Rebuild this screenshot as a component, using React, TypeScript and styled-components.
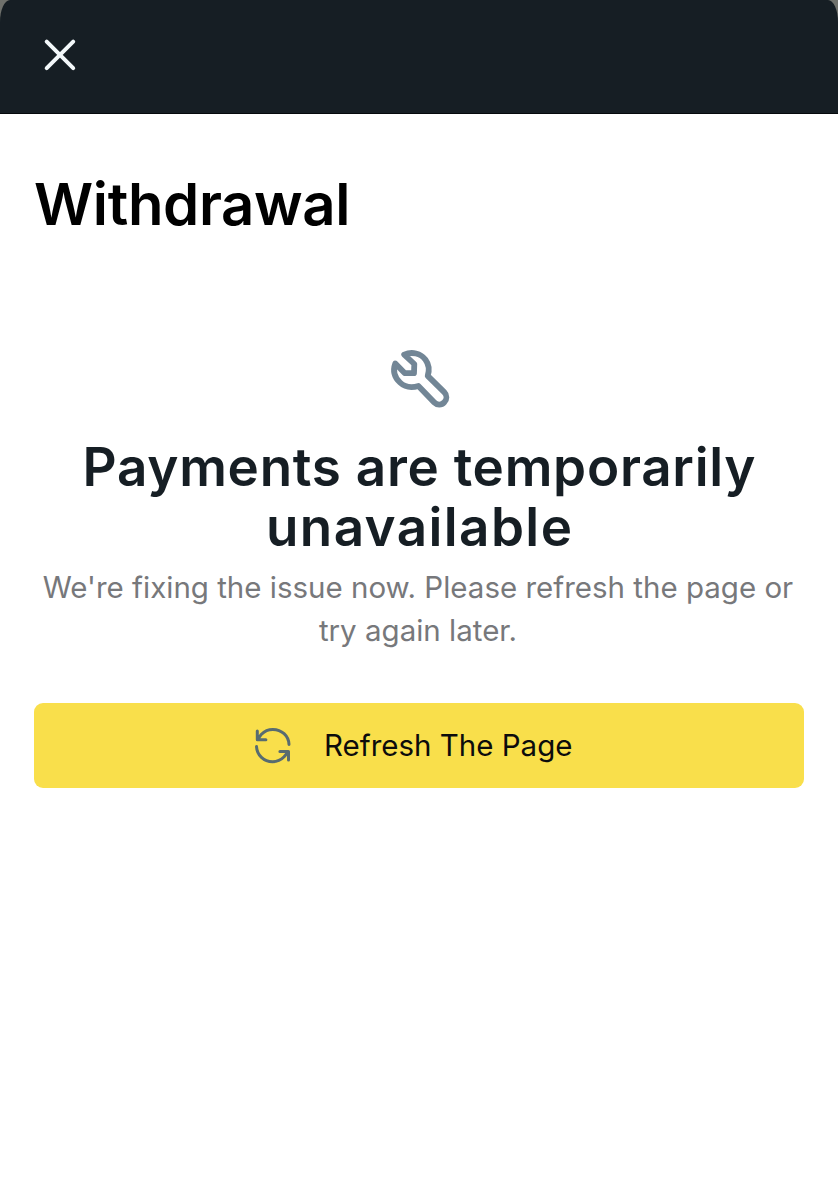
import React from 'react';
import styled, { createGlobalStyle } from 'styled-components';

const GlobalStyle = createGlobalStyle`
  * { box-sizing: border-box; }
  body { margin: 0; background: #fff; font-family: Inter, 'Liberation Sans', sans-serif; }
  h1, h2, p { margin: 0; }
`;

const Page = styled.div`
  min-height: 1200px;
  background: #fff;
`;

const Backdrop = styled.div`
  background: #6f716c;
`;

const TopBar = styled.header`
  height: 114px;
  padding: 38px 43px;
  background: #161e24;
  border-bottom: 1px solid #05090c;
  border-radius: 10px 10px 0 0 / 22px 22px 0 0;
`;

const IconButton = styled.button`
  display: block;
  width: 34px;
  height: 34px;
  padding: 0;
  border: 0;
  background: none;
`;

const Content = styled.main`
  display: flex;
  flex-direction: column;
  padding: 54px 34px 0;
`;

const Title = styled.h1`
  font-size: 58px;
  line-height: 72px;
  font-weight: 600;
  letter-spacing: -0.35px;
  color: #000;
  white-space: nowrap;
`;

const Notice = styled.section`
  display: flex;
  flex-direction: column;
  align-items: center;
  padding-top: 100px;
  text-align: center;
`;

const NoticeTitle = styled.h2`
  margin-top: 17px;
  font-size: 53px;
  line-height: 60px;
  font-weight: 600;
  color: #161e24;
  white-space: nowrap;
`;

const TitleLine = styled.span<{ $spacing: number }>`
  display: block;
  padding-left: ${({ $spacing }) => $spacing}px;
  letter-spacing: ${({ $spacing }) => $spacing}px;
`;

const NoticeText = styled.p`
  margin-top: 9px;
  padding-right: 2px;
  font-size: 29.5px;
  line-height: 43px;
  color: #77787b;
  white-space: nowrap;
`;

const RefreshButton = styled.button`
  display: flex;
  align-items: center;
  height: 85px;
  margin-top: 51px;
  padding: 0 0 0 220px;
  gap: 32px;
  border: 0;
  border-radius: 9px;
  background: #f9df4b;
  color: #0c0c0c;
  font: 400 29.5px/40px Inter, 'Liberation Sans', sans-serif;
  white-space: nowrap;
`;

const ButtonLabel = styled.span`
  padding-bottom: 2px;
`;

const CloseIcon = () => (
  <svg width="34" height="34" viewBox="0 0 34 34" fill="none" stroke="#f3f8fa" strokeWidth="4" strokeLinecap="round">
    <path d="M3.7 3.7 30.2 30.2M30.2 3.7 3.7 30.2" />
  </svg>
);

const WrenchIcon = () => (
  <svg width="80" height="80" viewBox="-1 -0.5 80 80" fill="none" stroke="#728696" strokeWidth="5.8" strokeLinecap="round" strokeLinejoin="round">
    <path d="M24.2 14.1C32 10.8 40.7 12.8 45.5 19.2C49 23.9 49.5 29.7 47.7 35.4L64.2 51.6C67.1 54.5 67.1 58.8 64.3 61.7C61.5 64.8 57.1 64.8 54.2 61.9L38.4 45.5C31.7 47.5 24.7 46.5 20 42C14.6 37 12.8 29.9 15.3 23L24.6 32.5L34 32.6L34.3 23.5Z" />
  </svg>
);

const RefreshIcon = () => (
  <svg width="38" height="38" viewBox="0 0 38 38" fill="none" stroke="#586c70" strokeWidth="3" strokeLinecap="round" strokeLinejoin="round">
    <path d="M3.3 4V12.7H11.9M3.5 12.5L7.5 7.2C10.4 4.1 14.4 2.4 18.9 2.4C27.7 2.4 34.6 8.9 35 17.4M2.5 19.6C3 28.2 9.8 34.7 18.6 34.7C23.1 34.7 27.2 32.8 30.1 29.8L34.3 24.7M25.9 24.4H34.5V33" />
  </svg>
);

export default function App() {
  return (
    <Page>
      <GlobalStyle />
      <Backdrop>
        <TopBar>
          <IconButton aria-label="Close"><CloseIcon /></IconButton>
        </TopBar>
      </Backdrop>
      <Content>
        <Title>Withdrawal</Title>
        <Notice>
          <WrenchIcon />
          <NoticeTitle>
            <TitleLine $spacing={0.73}>Payments are temporarily</TitleLine>
            <TitleLine $spacing={1.4}>unavailable</TitleLine>
          </NoticeTitle>
          <NoticeText>
            We're fixing the issue now. Please refresh the page or<br />try again later.
          </NoticeText>
        </Notice>
        <RefreshButton><RefreshIcon /><ButtonLabel>Refresh The Page</ButtonLabel></RefreshButton>
      </Content>
    </Page>
  );
}
